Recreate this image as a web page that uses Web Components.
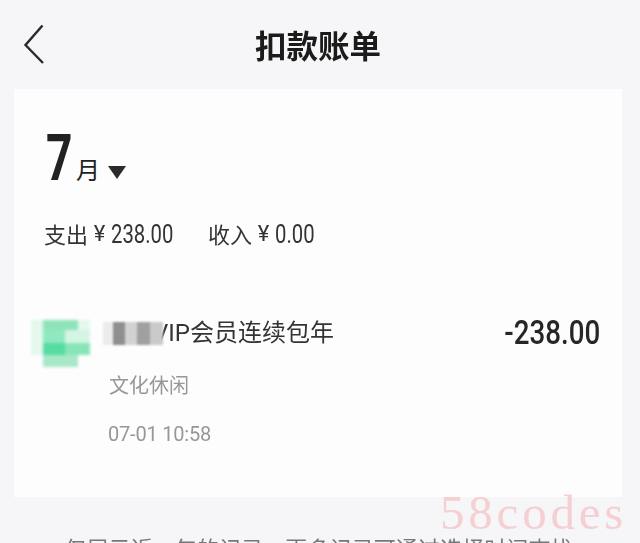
<!DOCTYPE html>
<html>
<head>
<meta charset="utf-8">
<style>
  html, body { margin: 0; height: 100%; }
  body { background: #f6f6f8; overflow: hidden; font-family: "Roboto", "Noto Sans CJK SC", sans-serif; }
</style>
</head>
<body>
<bill-page>
  <nav-bar title="扣款账单"></nav-bar>
  <bill-card>
    <month-picker month="7"></month-picker>
    <bill-summary expense="238.00" income="0.00"></bill-summary>
    <bill-row name="VIP会员连续包年" category="文化休闲" time="07-01 10:58" amount="-238.00"></bill-row>
  </bill-card>
  <foot-note>仅展示近一年的记录，更多记录可通过选择时间查找</foot-note>
</bill-page>
<script>
class BillPage extends HTMLElement {
  constructor() {
    super();
    this.attachShadow({ mode: 'open' });
    this.shadowRoot.innerHTML = `
      <style>
        :host { display: flex; flex-direction: column; width: 640px; height: 543px; overflow: hidden; position: relative; filter: blur(0.45px); }
        .mark { position: absolute; left: 440px; top: 494px; font: 49px/38px "Liberation Serif", serif; letter-spacing: 3.800px; color: #f4d0d2; }
      </style>
      <slot></slot>
      <div class="mark">58codes</div>
    `;
  }
}

class NavBar extends HTMLElement {
  constructor() {
    super();
    this.attachShadow({ mode: 'open' });
  }
  connectedCallback() {
    const title = this.getAttribute('title') || '';
    this.shadowRoot.innerHTML = `
      <style>
        :host { display: flex; align-items: center; justify-content: center; box-sizing: border-box; height: 89px; padding: 0 4px 2px 0; flex: none; position: relative; }
        h1 { margin: 0; font: 700 31.500px/40px "Noto Sans CJK SC", sans-serif; color: #1b1b1b; }
        svg { position: absolute; left: 22px; top: 24px; }
      </style>
      <svg width="24" height="42" viewBox="0 0 24 42"><path d="M20.500 1.500 3.500 21 21 39" fill="none" stroke="#2a2a2a" stroke-width="2.400"/></svg>
      <h1>${title}</h1>
    `;
  }
}

class BillCard extends HTMLElement {
  constructor() {
    super();
    this.attachShadow({ mode: 'open' });
    this.shadowRoot.innerHTML = `
      <style>
        :host { display: block; flex: none; box-sizing: border-box; height: 408px; margin: 0 18px 0 14px; padding: 37px 22px 0 30px; background: #fdfdfe; }
      </style>
      <slot></slot>
    `;
  }
}

class MonthPicker extends HTMLElement {
  constructor() {
    super();
    this.attachShadow({ mode: 'open' });
  }
  connectedCallback() {
    this.shadowRoot.innerHTML = `
      <style>
        :host { display: flex; align-items: flex-end; height: 60px; color: #222; }
        .num { display: inline-block; width: 30px; margin: 0 0 -3px 2px; font: 700 64px/60px "Roboto", sans-serif; transform: scaleX(0.72); transform-origin: 0 50%; }
        .unit { margin-bottom: 1px; font: 400 24px/32px "Noto Sans CJK SC", sans-serif; }
        svg { margin: 0 0 7px 8px; }
      </style>
      <span class="num">${this.getAttribute('month')}</span>
      <span class="unit">月</span>
      <svg width="18" height="13" viewBox="0 0 18 13"><path d="M0 0H18L9 13Z" fill="#2b2b2b"/></svg>
    `;
  }
}

class BillSummary extends HTMLElement {
  constructor() {
    super();
    this.attachShadow({ mode: 'open' });
  }
  connectedCallback() {
    this.shadowRoot.innerHTML = `
      <style>
        :host { display: flex; margin-top: 33px; height: 30px; align-items: center; font: 400 22px/30px "Noto Sans CJK SC", sans-serif; color: #333; }
        .cjk { margin-bottom: 3px; }
        .yen { width: 23px; text-align: center; font: 400 22px/30px "Roboto", sans-serif; }
        .val { display: inline-block; font: 400 26px/30px "Roboto", sans-serif; transform: scaleX(0.78); transform-origin: 0 50%; }
        .a { width: 64px; margin-right: 33px; }
      </style>
      <span class="cjk">支出</span><span class="yen">¥</span><span class="val a">${this.getAttribute('expense')}</span>
      <span class="cjk">收入</span><span class="yen">¥</span><span class="val">${this.getAttribute('income')}</span>
    `;
  }
}

class BillRow extends HTMLElement {
  constructor() {
    super();
    this.attachShadow({ mode: 'open' });
  }
  connectedCallback() {
    this.shadowRoot.innerHTML = `
      <style>
        :host { display: flex; margin: 68px 0 0 -13px; align-items: flex-start; }
        .logo { position: relative; flex: none; width: 59px; height: 47px; margin-top: 3px; filter: blur(1.500px);
          background:
            linear-gradient(#8ee4b8, #8ee4b8) 12px 0 / 35px 10px no-repeat,
            linear-gradient(#90e8c0, #90e8c0) 12px 10px / 22px 13px no-repeat,
            linear-gradient(#d5f5e4, #d5f5e4) 34px 10px / 25px 13px no-repeat,
            linear-gradient(#55dca0, #55dca0) 12px 23px / 22px 12px no-repeat,
            linear-gradient(#88e5b8, #88e5b8) 34px 23px / 25px 12px no-repeat,
            linear-gradient(#e4f8ee, #e4f8ee) 0 0 / 59px 35px no-repeat;
        }
        .logo::after { content: ""; position: absolute; left: 12px; top: 35px; width: 35px; height: 12px; background: #a8e8c8; }
        .body { flex: 1; margin-left: 13px; }
        .name { display: flex; align-items: center; height: 32px; font: 400 24px/32px "Roboto", "Noto Sans CJK SC", sans-serif; color: #333; }
        .mosaic { position: relative; z-index: 1; width: 60px; height: 23px; margin-right: -10px; flex: none; filter: blur(0.800px); background: linear-gradient(90deg, #ececec 0 10px, #8f8f8f 10px 22px, #d2d2d2 22px 34px, #a0a0a0 34px 47px, #cacaca 47px 60px); }
        .cat { margin: 22px 0 0 6px; font: 400 20px/28px "Noto Sans CJK SC", sans-serif; color: #979797; }
        .time { margin: 21px 0 0 5px; font: 400 20px/28px "Roboto", sans-serif; color: #979797; letter-spacing: -0.200px; }
        .amount { font: 500 33px/32px "Roboto", sans-serif; color: #262626; transform: scaleX(0.84); transform-origin: 100% 50%; }
      </style>
      <div class="logo"></div>
      <div class="body">
        <div class="name"><span class="mosaic"></span><span>${this.getAttribute('name')}</span></div>
        <div class="cat">${this.getAttribute('category')}</div>
        <div class="time">${this.getAttribute('time')}</div>
      </div>
      <div class="amount">${this.getAttribute('amount')}</div>
    `;
  }
}

class FootNote extends HTMLElement {
  constructor() {
    super();
    this.attachShadow({ mode: 'open' });
    this.shadowRoot.innerHTML = `
      <style>
        :host { display: block; flex: none; margin-top: 38px; padding-right: 3px; text-align: center; font: 400 22px/24px "Noto Sans CJK SC", sans-serif; letter-spacing: 0.100px; color: #777; white-space: nowrap; }
      </style>
      <slot></slot>
    `;
  }
}

customElements.define('bill-page', BillPage);
customElements.define('nav-bar', NavBar);
customElements.define('bill-card', BillCard);
customElements.define('month-picker', MonthPicker);
customElements.define('bill-summary', BillSummary);
customElements.define('bill-row', BillRow);
customElements.define('foot-note', FootNote);
</script>
</body>
</html>
